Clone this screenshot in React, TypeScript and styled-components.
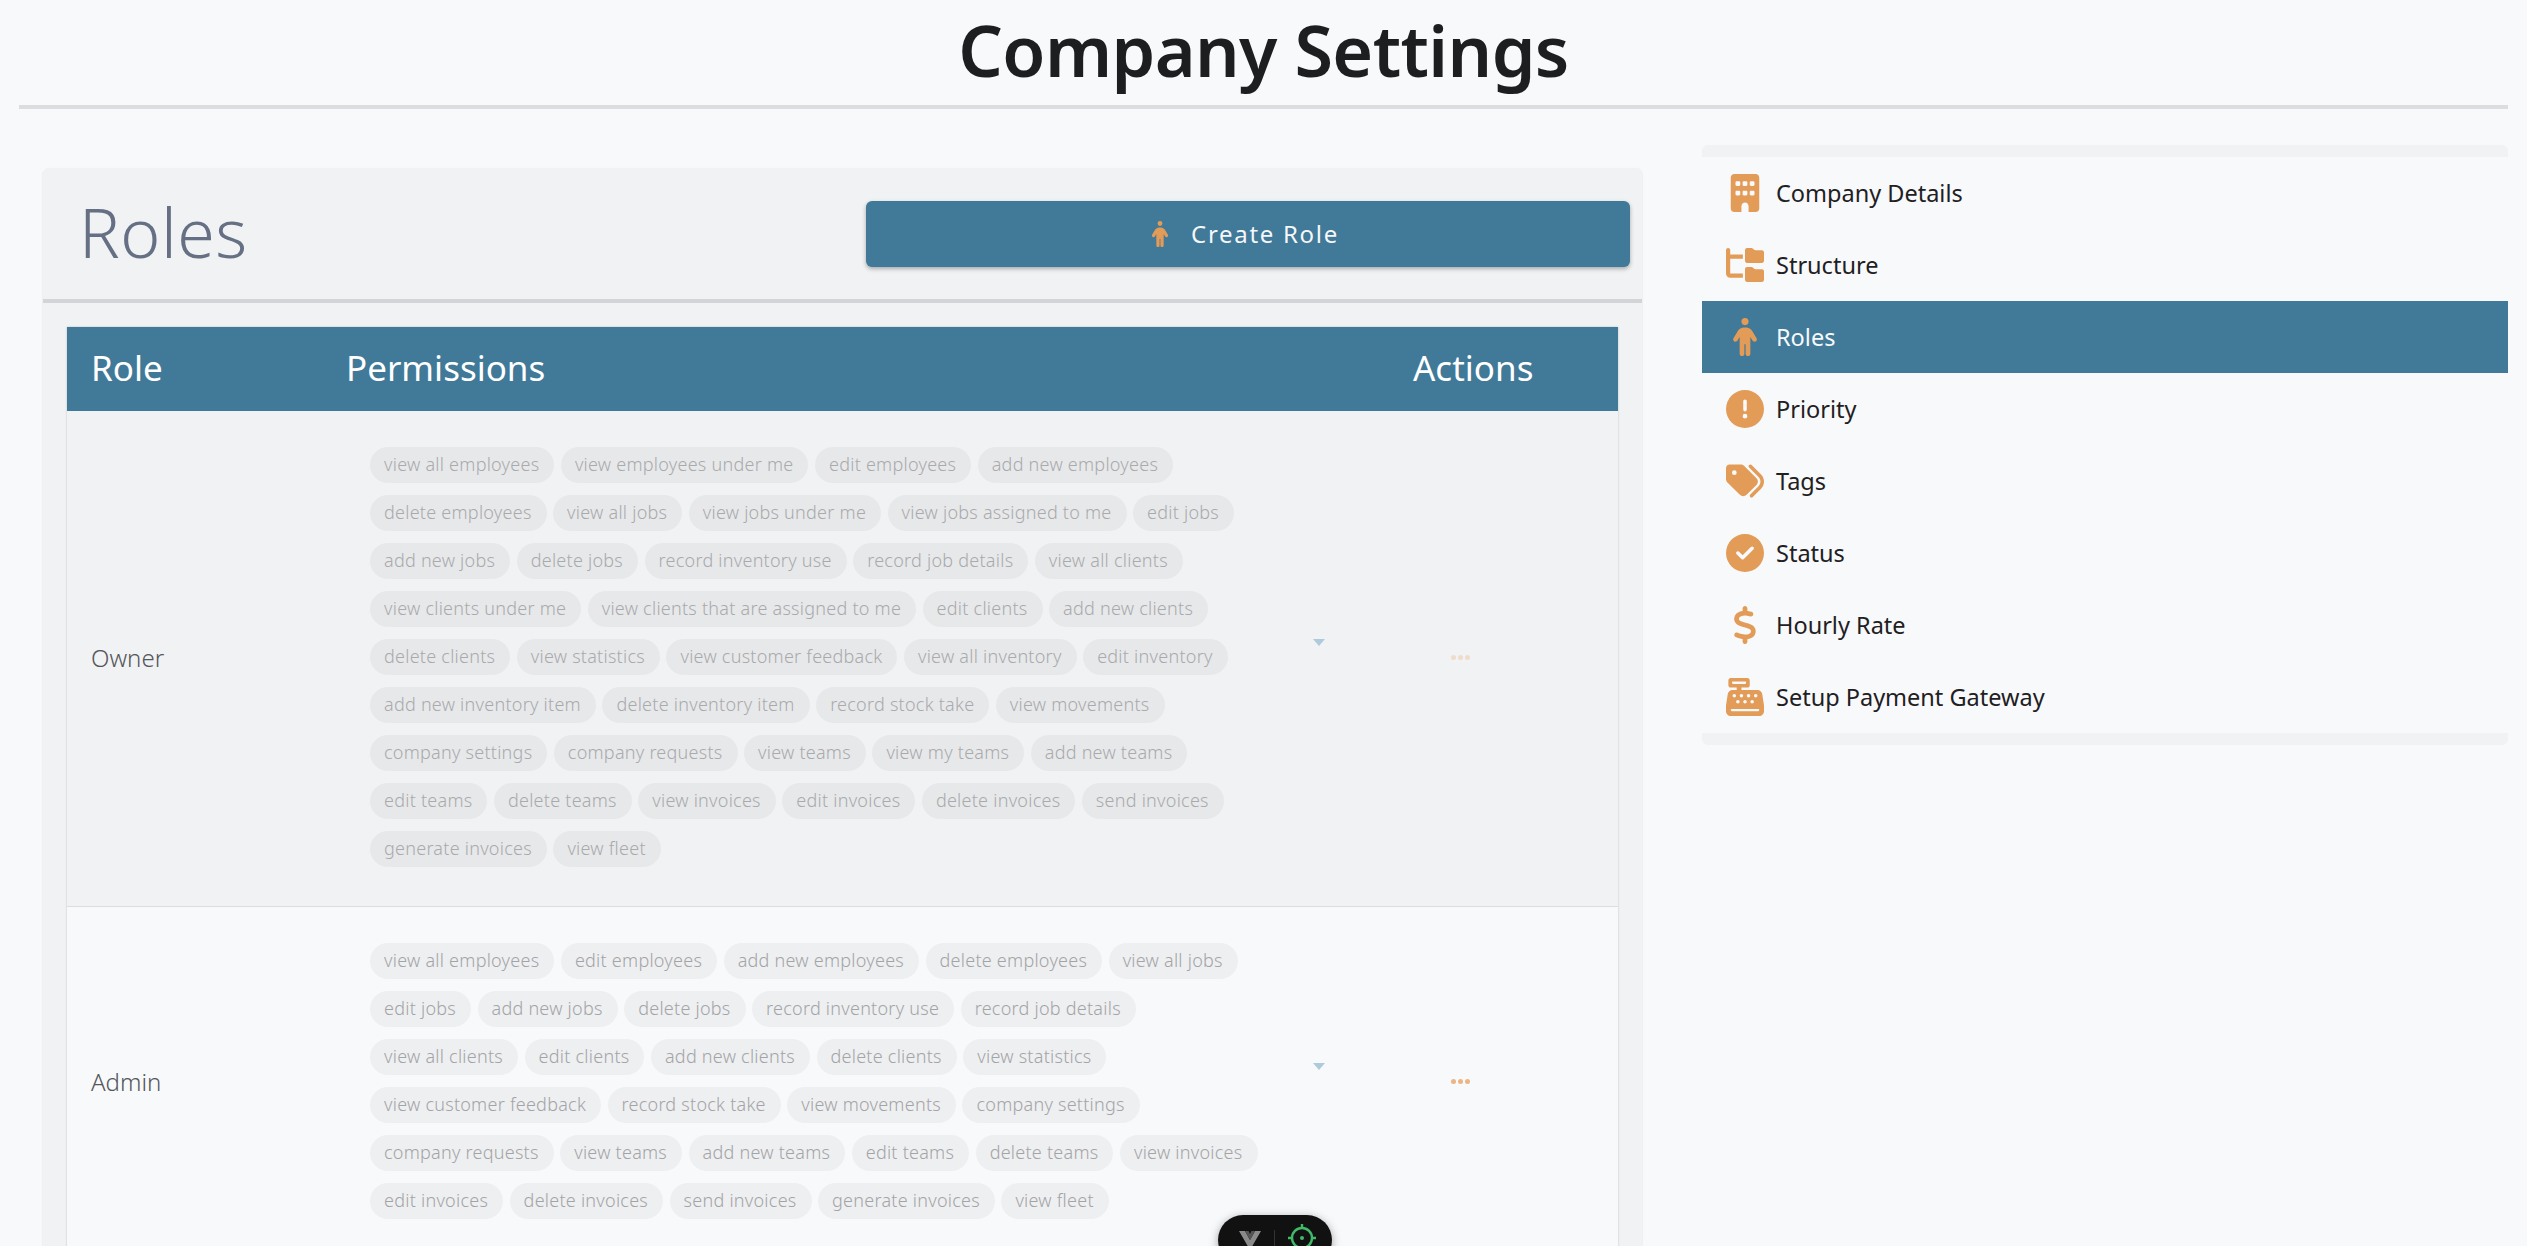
import styled, { createGlobalStyle } from "styled-components"
import {
  FaBuilding,
  FaFolderTree,
  FaPerson,
  FaCircleExclamation,
  FaTags,
  FaCircleCheck,
  FaDollarSign,
  FaCashRegister,
} from "react-icons/fa6"

const GlobalStyle = createGlobalStyle`
  html, body {
    margin: 0;
    height: 100%;
    overflow: hidden;
    background: #f7f9fb;
    font-family: "Noto Sans", "Open Sans", sans-serif;
  }
  * { box-sizing: border-box; }
`

const Page = styled.div`
  height: 1246px;
  overflow: hidden;
  padding: 0 19px;
`

const Title = styled.h1`
  margin: 0;
  height: 105px;
  line-height: 101px;
  text-align: center;
  font-size: 70px;
  font-weight: 600;
  color: #1d1e20;
  letter-spacing: -0.6px;
`

const Rule = styled.div`
  height: 4px;
  background: #dcdde0;
`

const Columns = styled.div`
  display: flex;
  align-items: flex-start;
  padding-left: 24px;
  gap: 60px;
`

const Card = styled.section`
  flex: 0 0 1599px;
  margin-top: 59px;
  background: #f1f2f4;
  border-radius: 6px 6px 0 0;
  box-shadow: 0 1px 2px rgba(0, 0, 0, 0.14);
`

const CardHeader = styled.header`
  display: flex;
  align-items: center;
  height: 135px;
  padding: 0 12px 0 36px;
  border-bottom: 4px solid #d3d4d7;
`

const CardTitle = styled.h2`
  flex: 1;
  margin: 0 0 4px;
  font-size: 68px;
  font-weight: 300;
  color: #667085;
  letter-spacing: 0.5px;
`

const CreateButton = styled.button`
  display: flex;
  align-items: center;
  justify-content: center;
  gap: 18px;
  width: 764px;
  height: 66px;
  padding-right: 16px;
  border: 0;
  border-radius: 6px;
  background: #417998;
  color: #f5f7f9;
  font: 400 24px "Noto Sans", sans-serif;
  letter-spacing: 1.7px;
  box-shadow: 0 2px 4px rgba(0, 0, 0, 0.3);
  svg {
    color: #e39b58;
    font-size: 26px;
  }
`

const Table = styled.div`
  margin: 24px 24px 0;
  box-shadow: 0 0 2px rgba(0, 0, 0, 0.2);
`

const HeadRow = styled.div`
  display: grid;
  grid-template-columns: 255px 1067px 1fr;
  height: 84px;
  padding-bottom: 4px;
  align-items: center;
  background: #417998;
  color: #fff;
  font-size: 35px;
  font-weight: 400;
  span {
    padding-left: 24px;
  }
`

const BodyRow = styled.div<{ $tone: string; $last?: boolean }>`
  display: grid;
  grid-template-columns: 255px 1067px 1fr;
  align-items: center;
  background: ${(p) => p.$tone};
  padding: 36px 0 39px;
  border-bottom: ${(p) => (p.$last ? "0" : "1px solid #dcdde0")};
`

const RoleName = styled.div`
  padding-left: 24px;
  font-size: 24px;
  font-weight: 300;
  color: #55565a;
`

const PermCell = styled.div`
  position: relative;
  padding-left: 48px;
`

const ChipList = styled.div`
  display: flex;
  flex-direction: column;
  gap: 12px;
`

const ChipRow = styled.div`
  display: flex;
  gap: 6.500px;
`

const Chip = styled.span<{ $faded?: boolean }>`
  height: 36px;
  line-height: 34px;
  padding: 0 15px 0 14px;
  border-radius: 18px;
  white-space: nowrap;
  font-size: 18px;
  font-weight: 300;
  letter-spacing: 0.25px;
  background: ${(p) => (p.$faded ? "#e7e8ea" : "#eeeff1")};
  color: ${(p) => (p.$faded ? "#a9aaac" : "#a3a4a6")};
`

const Caret = styled.i<{ $top: number }>`
  position: absolute;
  top: ${(p) => p.$top}px;
  left: 991px;
  width: 0;
  height: 0;
  border-left: 6.5px solid transparent;
  border-right: 6.5px solid transparent;
  border-top: 7px solid #aecbdb;
`

const Dots = styled.div<{ $color: string }>`
  display: flex;
  gap: 2px;
  margin-left: 62px;
  i {
    width: 5px;
    height: 5px;
    border-radius: 50%;
    background: ${(p) => p.$color};
  }
`

const Side = styled.nav`
  flex: 1;
  margin-top: 36px;
`

const SideCap = styled.div<{ $bottom?: boolean }>`
  height: 12px;
  background: #f1f2f4;
  border-radius: ${(p) => (p.$bottom ? "0 0 6px 6px" : "6px 6px 0 0")};
`

const SideItem = styled.a<{ $active?: boolean }>`
  display: flex;
  align-items: center;
  height: 72px;
  background: ${(p) => (p.$active ? "#417998" : "transparent")};
  color: ${(p) => (p.$active ? "#f7f9fb" : "#1f2022")};
  font-size: 23.500px;
`

const SideIcon = styled.span`
  display: flex;
  justify-content: center;
  align-items: center;
  flex: 0 0 74px;
  padding-left: 12px;
  font-size: 38px;
  color: #e39b58;
`

const DevBar = styled.div`
  position: fixed;
  left: 1218px;
  top: 1215px;
  display: flex;
  align-items: flex-start;
  gap: 13px;
  width: 114px;
  height: 50px;
  padding: 9px 0 0 21px;
  border-radius: 25px;
  background: #111;
  box-shadow: 0 2px 10px rgba(0, 0, 0, 0.35);
`

const DevLogo = styled.svg`
  margin-top: 6px;
`

const DevDivider = styled.i`
  width: 1px;
  height: 18px;
  margin-top: 6px;
  background: #333;
`

const owner = [
  ["view all employees", "view employees under me", "edit employees", "add new employees"],
  ["delete employees", "view all jobs", "view jobs under me", "view jobs assigned to me", "edit jobs"],
  ["add new jobs", "delete jobs", "record inventory use", "record job details", "view all clients"],
  ["view clients under me", "view clients that are assigned to me", "edit clients", "add new clients"],
  ["delete clients", "view statistics", "view customer feedback", "view all inventory", "edit inventory"],
  ["add new inventory item", "delete inventory item", "record stock take", "view movements"],
  ["company settings", "company requests", "view teams", "view my teams", "add new teams"],
  ["edit teams", "delete teams", "view invoices", "edit invoices", "delete invoices", "send invoices"],
  ["generate invoices", "view fleet"],
]

const admin = [
  ["view all employees", "edit employees", "add new employees", "delete employees", "view all jobs"],
  ["edit jobs", "add new jobs", "delete jobs", "record inventory use", "record job details"],
  ["view all clients", "edit clients", "add new clients", "delete clients", "view statistics"],
  ["view customer feedback", "record stock take", "view movements", "company settings"],
  ["company requests", "view teams", "add new teams", "edit teams", "delete teams", "view invoices"],
  ["edit invoices", "delete invoices", "send invoices", "generate invoices", "view fleet"],
]

const menu = [
  { label: "Company Details", icon: <FaBuilding /> },
  { label: "Structure", icon: <FaFolderTree /> },
  { label: "Roles", icon: <FaPerson />, active: true },
  { label: "Priority", icon: <FaCircleExclamation /> },
  { label: "Tags", icon: <FaTags /> },
  { label: "Status", icon: <FaCircleCheck /> },
  { label: "Hourly Rate", icon: <FaDollarSign /> },
  { label: "Setup Payment Gateway", icon: <FaCashRegister /> },
]

const Chips = ({ rows, faded }: { rows: string[][]; faded?: boolean }) => (
  <ChipList>
    {rows.map((row, i) => (
      <ChipRow key={i}>
        {row.map((name) => (
          <Chip key={name} $faded={faded}>
            {name}
          </Chip>
        ))}
      </ChipRow>
    ))}
  </ChipList>
)

const App = () => {
  return (
    <Page>
      <GlobalStyle />
      <Title>Company Settings</Title>
      <Rule />
      <Columns>
        <Card>
          <CardHeader>
            <CardTitle>Roles</CardTitle>
            <CreateButton>
              <FaPerson />
              Create Role
            </CreateButton>
          </CardHeader>
          <Table>
            <HeadRow>
              <span>Role</span>
              <span>Permissions</span>
              <span>Actions</span>
            </HeadRow>
            <BodyRow $tone="#f1f2f4">
              <RoleName>Owner</RoleName>
              <PermCell>
                <Chips rows={owner} faded />
                <Caret $top={192} />
              </PermCell>
              <Dots $color="#efdccb">
                <i />
                <i />
                <i />
              </Dots>
            </BodyRow>
            <BodyRow $tone="#f7f9fb" $last>
              <RoleName>Admin</RoleName>
              <PermCell>
                <Chips rows={admin} />
                <Caret $top={120} />
              </PermCell>
              <Dots $color="#ecb585">
                <i />
                <i />
                <i />
              </Dots>
            </BodyRow>
          </Table>
        </Card>
        <Side>
          <SideCap />
          {menu.map((item) => (
            <SideItem key={item.label} $active={item.active}>
              <SideIcon>{item.icon}</SideIcon>
              {item.label}
            </SideItem>
          ))}
          <SideCap $bottom />
        </Side>
      </Columns>
      <DevBar>
        <DevLogo width="22" height="20" viewBox="0 0 22 20">
          <path d="M0 1h6l5 9 5-9h6L11 20z" fill="#8a8a8a" />
          <path d="M6 1h3.500L11 4l1.500-3H16l-5 9z" fill="#555" />
        </DevLogo>
        <DevDivider />
        <svg width="28" height="28" viewBox="0 0 28 28" fill="none" stroke="#41b86a" strokeWidth="2.4">
          <circle cx="14" cy="14" r="10" />
          <circle cx="14" cy="14" r="2" fill="#41b86a" stroke="none" />
          <path d="M14 0v5M14 23v5M0 14h5M23 14h5" />
        </svg>
      </DevBar>
    </Page>
  )
}

export default App
